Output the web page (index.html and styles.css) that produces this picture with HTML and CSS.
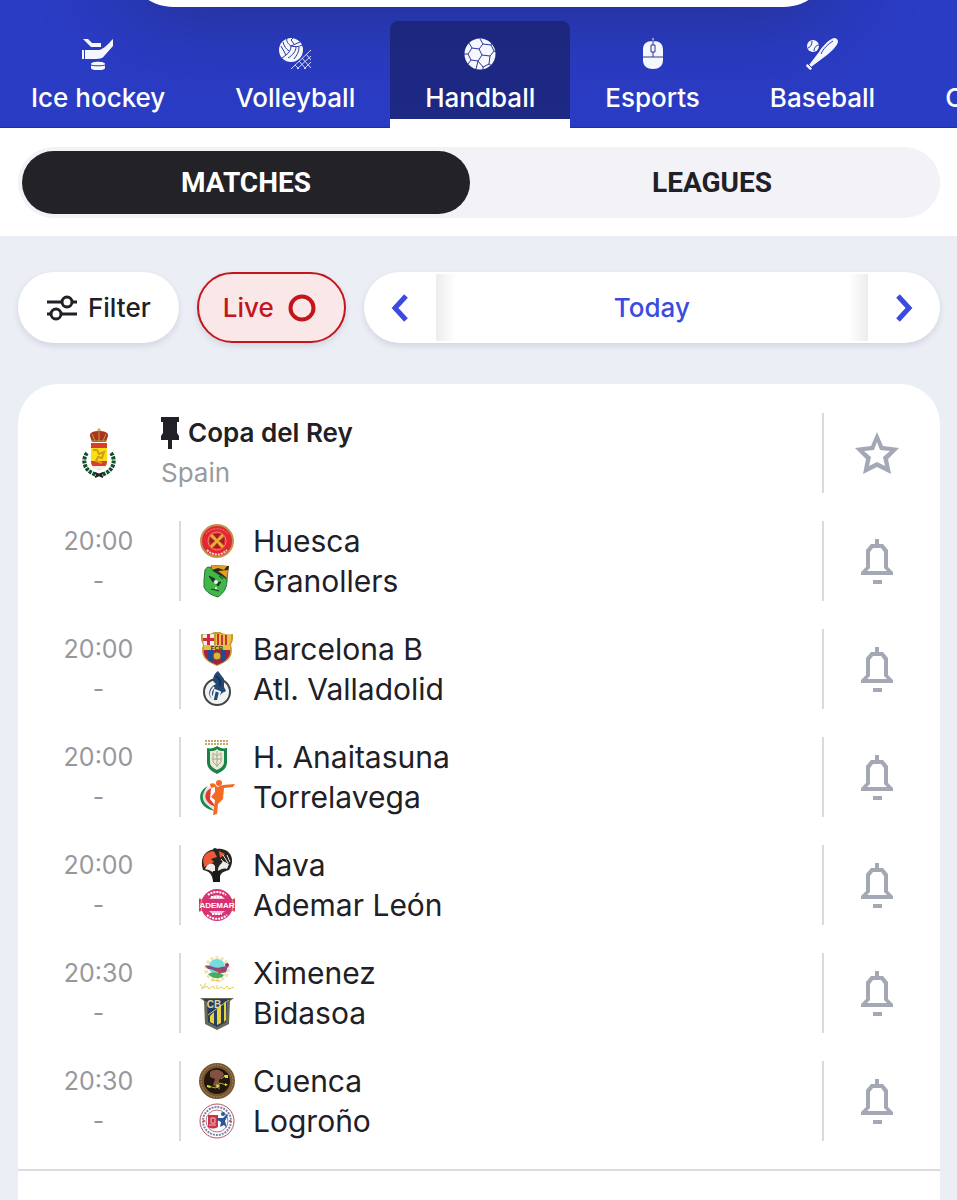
FILE: index.html
```html
<!DOCTYPE html>
<html lang="en">
<head>
  <meta charset="UTF-8">
  <meta name="viewport" content="width=device-width, initial-scale=1.0">
  <title>Handball matches</title>
  <link rel="stylesheet" href="styles.css">
</head>
<body>
  <!-- Shared icons -->
  <svg class="sprite" aria-hidden="true">
    <symbol id="bell" viewBox="0 0 32 45">
      <path fill-rule="evenodd" d="M14 0h4v5h4l5 6v17l5 5v3H0v-3l5-5V11l5-6h4zM12 9l-3 4v16l-3 3h20l-3-3V13l-3-4zM12 41h9v4h-9z"/>
    </symbol>
  </svg>

  <!-- Sports -->
  <header class="sports">
    <div class="sheet"></div>
    <nav class="sports-nav">
      <a href="#" class="sport">
        <svg viewBox="0 0 32 32">
          <path d="M1 1h5l4 4h9v4H9zM3 12h14c5-1 9-6 14-11v7l-8 9c-2 3-5 4-9 4H3z"/>
          <path d="M0 12h2v9H0z"/>
          <path d="M9 26c0-3 14-3 14 0v4c0 3-14 3-14 0z"/>
          <path class="cut" d="M9 27c2 1 12 1 14 0"/>
        </svg>
        <span>Ice hockey</span>
      </a>
      <a href="#" class="sport">
        <svg viewBox="0 0 32 32">
          <circle cx="12" cy="12" r="12"/>
          <path class="cut" d="M8 0c-1 3 1 6 4 8l9-4M12 8c0 4-2 7-5 9L2 8M7 17l-4 3M12 8c4 1 8 1 11-1M17 9c0 4-3 8-8 11M20 9c0 5-2 8-5 12M4 4c1 4 3 7 6 9M14 0l-2 2 3 4"/>
          <path class="net" d="M12 31l20-19M18 31l14-13M25 31l7-7M16 27l4 4M20 23l7 8M23 20l9 10M27 16l5 6"/>
        </svg>
        <span>Volleyball</span>
      </a>
      <a href="#" class="sport active">
        <svg viewBox="0 0 32 32">
          <circle cx="16" cy="16" r="15.5"/>
          <path class="cut" d="M8 10l7 1 3 6-4 6-7-1-3-6zM15 11l4-5-3-5M19 6l8 1 3 6M27 7l1-3M18 17l8 1 4-5M26 18l-1 8-6 3-5-6M25 26l3 2M7 22l-3 4M14 23l-2 8M4 16H0M8 10L5 5M19 29v3M30 13l2 1"/>
        </svg>
        <span>Handball</span>
      </a>
      <a href="#" class="sport">
        <svg viewBox="0 0 32 32">
          <path d="M15.500 0h1v4h-1zM6 12c0-6 3-9 10-9s10 3 10 9v10c0 6-4 9-10 9S6 28 6 22z"/>
          <path class="cut" d="M6 19h20M16 2v5M16 14v5M14 7h4v7h-4z"/>
        </svg>
        <span>Esports</span>
      </a>
      <a href="#" class="sport">
        <svg viewBox="0 0 32 32">
          <circle cx="7" cy="8" r="6"/>
          <path class="cut" d="M2 10c3-1 4-4 4-7M8 13c0-3 2-6 5-6"/>
          <path d="M28 0c3 0 4 2 4 4-1 4-6 9-11 13L5 29l1 2-2 1-4-4 1-2 2 1 10-13C16 9 23 1 28 0z"/>
          <path class="cut" d="M15 16c2-5 7-10 12-13M2 26l4 4"/>
        </svg>
        <span>Baseball</span>
      </a>
      <a href="#" class="sport"><span>Cricket</span></a>
    </nav>
  </header>

  <main>
    <div class="views">
      <div class="segmented">
        <button class="segment active">MATCHES</button>
        <button class="segment">LEAGUES</button>
      </div>
    </div>

    <!-- Filters -->
    <div class="toolbar">
      <button class="pill filter">
        <svg width="32" height="26" viewBox="0 0 32 26">
          <path d="M1 7h15M26 7h5M1 19h4M15 19h16"/>
          <circle cx="21" cy="7" r="5"/>
          <circle cx="10" cy="19" r="5"/>
        </svg>
        Filter
      </button>
      <button class="pill live">
        Live
        <svg width="28" height="28" viewBox="0 0 28 28"><circle cx="14" cy="14" r="11.500"/></svg>
      </button>
      <div class="pill dates">
        <button class="arrow" aria-label="Previous day">
          <svg width="18" height="28" viewBox="0 0 18 28"><path d="M15 2L4 14l11 12"/></svg>
        </button>
        <button class="day">Today</button>
        <button class="arrow" aria-label="Next day">
          <svg width="18" height="28" viewBox="0 0 18 28"><path d="M3 2l11 12L3 26"/></svg>
        </button>
      </div>
    </div>

    <section class="card">
      <div class="league">
        <div class="row league-head">
          <div class="emblem">
            <svg width="34" height="50" viewBox="0 0 34 50">
              <path d="M5 25C0 31 1 44 16 47M29 25c5 6 4 19-11 22" fill="none" stroke="#12502c" stroke-width="4" stroke-dasharray="3 1"/>
              <path d="M13 49l8-4M21 49l-8-4" stroke="#222" stroke-width="2"/>
              <path d="M9 15h16v18c0 6-4 8-8 9-4-1-8-3-8-9z" fill="#f8df16"/>
              <path d="M9 15h16v5H9zM9 33h16c0 4-2 6-5 7h-6c-3-1-5-3-5-7z" fill="#dd3b2c"/>
              <path d="M11 22h4l2 4 5-2-2 6-4-1-2 4 6 2" fill="none" stroke="#d89c13" stroke-width="2"/>
              <path d="M11 38h12v3H11z" fill="#f4eeee"/>
              <path d="M10 14L8 8c-1-4 5-5 9-5s10 1 9 5l-2 6z" fill="#a73721"/>
              <path d="M17 0v13M10 6l3 7M24 6l-3 7M15 2h4M10 13h14" fill="none" stroke="#c79832" stroke-width="1"/>
            </svg>
          </div>
          <div class="league-info">
            <h2>
              <svg width="18" height="32" viewBox="0 0 18 32"><path d="M0 0h18v5h-2v11l2 3v4h-7v9H7v-9H0v-4l2-3V5H0z"/></svg>
              Copa del Rey
            </h2>
            <p>Spain</p>
          </div>
          <button class="action" aria-label="Add to favourites">
            <svg width="44" height="42" viewBox="0 0 44 42"><path fill-rule="evenodd" d="M22 0l6 14 16 2-11 11 3 15-14-7-14 7 3-15L0 16l16-2zM22 10l-3 8-10 1 7 6-2 9 8-4 8 4-2-9 7-6-10-1z"/></svg>
          </button>
        </div>

        <div class="row">
          <div class="time"><span>20:00</span><span>-</span></div>
          <div class="teams">
            <div class="team">
              <svg viewBox="0 0 36 36">
                <circle cx="18" cy="18" r="17" fill="#bd9550"/>
                <circle cx="18" cy="18" r="15" fill="#e32732"/>
                <circle cx="18" cy="18" r="9" fill="#d62b2b" stroke="#eb8c78"/>
                <path d="M12 12l12 12M24 12L12 24" stroke="#e6ae32" stroke-width="3"/>
                <path d="M15 11l3 5 3-5zM15 25l3-5 3 5zM11 15l5 3-5 3zM25 15l-5 3 5 3z" fill="#9d2020"/>
                <path d="M8 27c6 6 14 6 20 0" fill="none" stroke="#ffd8cc" stroke-width="2" stroke-dasharray="2 1"/>
                <path d="M7 11c5-7 17-7 22 0" fill="none" stroke="#ee7a74" stroke-width="1" stroke-dasharray="2 1"/>
              </svg>
              Huesca
            </div>
            <div class="team">
              <svg viewBox="0 0 36 36">
                <path d="M12 2l18 1-2 16-9-3-8-7z" fill="#2c271c"/>
                <path d="M12 2l16 1-3 4-6-2-6 2zM19 8l10-1-1 8-5-4z" fill="#e3a020"/>
                <path d="M6 7c2-4 6-4 8 1l8 5 6 3c0 8-2 13-9 18-7-2-12-5-14-10L5 17z" fill="#42b649" stroke="#237337"/>
                <path d="M10 13l6 3-2 3zM17 20l5-1-3 4zM12 26l8 2M20 13l4 3" fill="#143d24" stroke="#143d24"/>
                <circle cx="17" cy="19" r="2" fill="#e7f4df"/>
                <circle cx="17" cy="25" r="1" fill="#fff"/>
              </svg>
              Granollers
            </div>
          </div>
          <button class="action" aria-label="Notify me"><svg width="32" height="45"><use href="#bell"/></svg></button>
        </div>

        <div class="row">
          <div class="time"><span>20:00</span><span>-</span></div>
          <div class="teams">
            <div class="team">
              <svg viewBox="0 0 36 36">
                <path d="M2 3c5 1 10 0 13-2h6c3 2 8 3 13 2v6l-2 5c3 10-1 16-14 21C5 30 1 24 4 14L2 9z" fill="#c59b37"/>
                <path d="M4 4l11-1v11H5l-1-5z" fill="#f5eeee"/>
                <path d="M8 3h3v11H8zM4 7h11v3H4z" fill="#d52640"/>
                <path d="M17 3l15 1v5l-2 5H17z" fill="#edc240"/>
                <path d="M19 3v11M23 4v10M27 4v10" stroke="#c7323f" stroke-width="2"/>
                <path d="M5 19h26c1 7-4 11-13 15C9 30 4 26 5 19z" fill="#a9203e"/>
                <path d="M9 19h5v13l-5-3zM22 19h5v10l-5 3z" fill="#244a91"/>
                <circle cx="18" cy="25" r="4" fill="#dfb43b" stroke="#705024"/>
                <path d="M5 14h26v5H5z" fill="#e5be45"/>
                <text class="badge-text" x="18" y="19" fill="#302c28">FCB</text>
              </svg>
              Barcelona B
            </div>
            <div class="team">
              <svg viewBox="0 0 36 36">
                <circle cx="18" cy="21" r="13" fill="#f2f2f0" stroke="#42464a" stroke-width="2"/>
                <path d="M15 29C7 25 10 16 17 13l-3-3c0-5 2-8 5-10l6 8v8l2 4-5 3-2 6z" fill="#244874"/>
                <path d="M15 16c-4 5-4 8-1 12l2-9 5 2-2 8 6-7-2 7" fill="none" stroke="#eef3f6" stroke-width="2"/>
                <path d="M17 5c4 3 5 7 4 10" fill="none" stroke="#173153" stroke-width="2"/>
              </svg>
              Atl. Valladolid
            </div>
          </div>
          <button class="action" aria-label="Notify me"><svg width="32" height="45"><use href="#bell"/></svg></button>
        </div>

        <div class="row">
          <div class="time"><span>20:00</span><span>-</span></div>
          <div class="teams">
            <div class="team">
              <svg viewBox="0 0 36 36">
                <path d="M6 2h24M6 5h24" stroke="#c4aa69" stroke-width="2" stroke-dasharray="2 1"/>
                <path d="M8 9c4 1 7 0 10-2 3 2 6 3 10 2v14c0 6-4 9-10 12C12 32 8 29 8 23z" fill="#178348"/>
                <path d="M11 12c3 0 5 0 7-2 2 2 4 2 7 2v11c0 4-3 6-7 8-4-2-7-4-7-8z" fill="#ece8d3"/>
                <path d="M14 14l4 3 4-3v9l-4 4-4-4zM18 12v16M13 20h10" fill="none" stroke="#a3aa8c"/>
              </svg>
              H. Anaitasuna
            </div>
            <div class="team">
              <svg viewBox="0 0 36 36">
                <path d="M9 7C-3 12-2 30 17 32 6 27 1 14 9 7z" fill="#178b52"/>
                <path d="M12 7C-1 13 2 27 17 30 8 24 5 14 12 7z" fill="#e5dfd3"/>
                <path d="M12 9C3 14 5 24 17 28l-6-8z" fill="#e13a2e"/>
                <circle cx="20" cy="4" r="3" fill="#f26a23"/>
                <path d="M11 5c4-2 6 1 7 3l6-2 12-1-2 3-9 1-1 11-5 5-1 10-4 1 2-15-4-3 4-5v-5l-4 1z" fill="#f26a23"/>
              </svg>
              Torrelavega
            </div>
          </div>
          <button class="action" aria-label="Notify me"><svg width="32" height="45"><use href="#bell"/></svg></button>
        </div>

        <div class="row">
          <div class="time"><span>20:00</span><span>-</span></div>
          <div class="teams">
            <div class="team">
              <svg viewBox="0 0 36 36">
                <path d="M4 23C-1 7 11 0 23 2c10 2 13 12 7 21-7 2-9 3-10 11h-6c-1-7-4-10-10-11z" fill="#282423"/>
                <path d="M5 18C2 9 8 4 15 4l3 6-6 2 3 3-10 5zM20 4l6 3-5 4z" fill="#ed5a36"/>
                <path d="M6 22c2-5 7-8 10-3v9c-2-4-6-5-10-6zM19 24c0-6 3-6 5-10l6 3-2 5c-3-1-6 0-9 2z" fill="#f1eeea"/>
                <path d="M24 8l5 8M28 8l3 7M22 12l5 6" stroke="#e9e3df" stroke-width="1"/>
                <circle cx="16" cy="3" r="2" fill="#282423"/>
                <path d="M14 24h7v11h-7z" fill="#171717"/>
              </svg>
              Nava
            </div>
            <div class="team">
              <svg viewBox="0 0 36 36">
                <circle cx="18" cy="18" r="16" fill="#d93378"/>
                <circle cx="18" cy="18" r="10" fill="#f5c7d7"/>
                <path d="M0 12h36v12H0z" fill="#d82f73"/>
                <path d="M9 8c5-4 13-4 18 0M8 28c6 5 14 5 20 0M12 10h12M13 27h10" fill="none" stroke="#fff" stroke-width="2" stroke-dasharray="2 1"/>
                <path d="M0 11l3 2-2 5 2 5-3 2M36 11l-3 2 2 5-2 5 3 2" fill="none" stroke="#e4a15f"/>
                <text class="badge-text badge-wide" x="18" y="21" fill="#fff">ADEMAR</text>
              </svg>
              Ademar León
            </div>
          </div>
          <button class="action" aria-label="Notify me"><svg width="32" height="45"><use href="#bell"/></svg></button>
        </div>

        <div class="row">
          <div class="time"><span>20:30</span><span>-</span></div>
          <div class="teams">
            <div class="team">
              <svg viewBox="0 0 36 36">
                <circle cx="18" cy="14" r="11" fill="none" stroke="#f0e6b4" stroke-width="4" stroke-dasharray="3 2"/>
                <circle cx="18" cy="12" r="8" fill="#72dddd"/>
                <path d="M6 11c6-2 10 4 16 1l7-1-2 6c-7 3-11-3-18-3z" fill="#8b4a78"/>
                <path d="M9 19c6-3 12-1 16 1-3 5-12 4-16-1z" fill="#48ac65"/>
                <path d="M17 13l7 3-4 3z" fill="#bd4545"/>
                <circle cx="28" cy="10" r="2" fill="#a12e70"/>
                <path d="M1 29l3 4 3-5M2 34l6-3 2 3 4-3 2 3M18 30v4l4-2 3 2 3-3 2 3 5-2M12 25l10 1" fill="none" stroke="#e7ce50" stroke-width="1"/>
              </svg>
              Ximenez
            </div>
            <div class="team">
              <svg viewBox="0 0 36 36">
                <path d="M1 3h34l-4 3-1 23-12 6-12-6L5 6z" fill="#676b55"/>
                <path d="M4 4h28l-4 3-1 20-9 5-9-5L8 7z" fill="#253c65"/>
                <path d="M11 21l4-4v12l-4-2zM18 14l4-4v18l-4 2zM25 8l2-2v19l-2 2z" fill="#ead33a"/>
                <path d="M9 20L30 5" stroke="#d0c57a" stroke-width="1"/>
                <text class="badge-text badge-large" x="15" y="13" fill="#dfd59b">CB</text>
              </svg>
              Bidasoa
            </div>
          </div>
          <button class="action" aria-label="Notify me"><svg width="32" height="45"><use href="#bell"/></svg></button>
        </div>

        <div class="row">
          <div class="time"><span>20:30</span><span>-</span></div>
          <div class="teams">
            <div class="team">
              <svg viewBox="0 0 36 36">
                <circle cx="18" cy="18" r="18" fill="#775632"/>
                <circle cx="18" cy="18" r="16" fill="none" stroke="#a68959" stroke-width="1" stroke-dasharray="2 1"/>
                <circle cx="18" cy="18" r="13" fill="#21170f"/>
                <path d="M11 9c4-4 13-2 14 3l-5 5 1 10-7-5 2-6-5-2z" fill="#80523f"/>
                <path d="M8 23l9 2 4-5 6 2M22 16l4-3" fill="none" stroke="#b0ae35"/>
                <path d="M25 12h4v3h-3zM8 22l4 1-1 2-3-1zM17 21l4 2-3 2zM26 20l3 2-3 1z" fill="#d8dd42"/>
              </svg>
              Cuenca
            </div>
            <div class="team">
              <svg viewBox="0 0 36 36">
                <circle cx="18" cy="18" r="17" fill="#fff" stroke="#b75264"/>
                <circle cx="18" cy="18" r="14" fill="none" stroke="#7688a8" stroke-width="2" stroke-dasharray="2 1"/>
                <circle cx="18" cy="18" r="11" fill="#fff" stroke="#bd7180"/>
                <path d="M9 12h10v12c-4 2-7 2-10 0z" fill="#c83447"/>
                <path d="M12 15h4v5h-4zM10 22h7" fill="none" stroke="#efbdc1"/>
                <circle cx="24" cy="11" r="2" fill="#26569b"/>
                <path d="M18 15l6 0 4-4 1 1-3 6 2 7-3-3-4 2 1-5-4-2z" fill="#26569b"/>
                <circle cx="5" cy="18" r="1" fill="#c83447"/>
                <circle cx="31" cy="18" r="1" fill="#c83447"/>
              </svg>
              Logroño
            </div>
          </div>
          <button class="action" aria-label="Notify me"><svg width="32" height="45"><use href="#bell"/></svg></button>
        </div>
      </div>
    </section>
  </main>
</body>
</html>
```
FILE: styles.css
```css
/* General Reset */
* {
  margin: 0;
  padding: 0;
  box-sizing: border-box;
}

body {
  font-family: Inter, "Liberation Sans", sans-serif;
  font-size: 26px;
  background-color: #ebeef5;
  color: #202026;
  min-height: 100vh;
  display: flex;
  flex-direction: column;
}

main {
  flex: 1;
  display: flex;
  flex-direction: column;
}

button {
  font: inherit;
  color: inherit;
  background: none;
  border: 0;
  cursor: pointer;
}

a {
  color: inherit;
  text-decoration: none;
}

svg {
  display: block;
  flex: none;
}

.sprite {
  position: absolute;
  width: 0;
  height: 0;
}

/* Sports */
.sports {
  position: relative;
  background-color: #2b3cc4;
  color: #fff;
  padding-top: 21px;
  overflow: hidden;
  flex: none;
}

.sheet {
  position: absolute;
  top: -93px;
  left: 13%;
  right: 13%;
  height: 100px;
  border-radius: 50px;
  background-color: #fff;
  box-shadow: 0 0 90px rgba(20, 25, 40, 0.4);
}

.sports-nav {
  position: relative;
  display: flex;
  margin-left: -4px;
}

.sport {
  flex: none;
  height: 107px;
  padding: 17px 35px 0;
  display: flex;
  flex-direction: column;
  align-items: center;
  gap: 12px;
  font-weight: 500;
  line-height: 32px;
  border-bottom: 1px solid #2230a4;
}

.sport svg {
  width: 32px;
  height: 32px;
  fill: #f5f7ff;
}

.sport:last-child {
  padding-top: 61px;
}

.sport.active {
  background-color: rgba(23, 31, 99, 0.65);
  border-radius: 8px 8px 0 0;
  border-bottom: 9px solid #fff;
}

.sports .cut {
  fill: none;
  stroke: #2c3797;
  stroke-width: 1px;
}

.sports .net {
  fill: none;
  stroke: #d5dbff;
  stroke-width: 1px;
}

/* Matches / Leagues */
.views {
  background-color: #fff;
  padding: 19px 17px 18px 18px;
}

.segmented {
  display: flex;
  gap: 18px;
  background-color: #f2f2f7;
  border-radius: 36px;
  padding: 4px;
}

.segment {
  flex: 1;
  height: 63px;
  border-radius: 32px;
  font-family: Roboto, "Liberation Sans", sans-serif;
  font-size: 28px;
  font-weight: bold;
}

.segment.active {
  background-color: #222227;
  color: #fff;
}

/* Filters */
.toolbar {
  display: flex;
  gap: 18px;
  padding: 36px 17px 0 18px;
}

.pill {
  height: 71px;
  border-radius: 36px;
  background-color: #fff;
  box-shadow: 0 3px 6px rgba(30, 40, 70, 0.12);
  display: flex;
  align-items: center;
  font-weight: 500;
}

.filter {
  padding: 0 28px;
  gap: 10px;
}

.filter svg {
  fill: none;
  stroke: #202026;
  stroke-width: 3px;
}

.live {
  padding: 0 28px 0 24px;
  gap: 14px;
  color: #c3161c;
  background-color: #fae7e8;
  border: 2px solid #c3161c;
}

.live svg {
  fill: none;
  stroke: #c3161c;
  stroke-width: 4px;
}

.dates {
  flex: 1;
  color: #3a4be0;
}

.arrow {
  width: 72px;
  height: 71px;
  display: flex;
  align-items: center;
  justify-content: center;
}

.arrow svg {
  fill: none;
  stroke: #3a4be0;
  stroke-width: 5px;
}

.day {
  flex: 1;
  height: 67px;
  background: linear-gradient(to right, #ededed, #fff 20px, #fff calc(100% - 20px), #ededed);
}

/* League card */
.card {
  flex: 1;
  margin: 41px 17px 0 18px;
  padding-top: 29px;
  background-color: #fff;
  border-radius: 40px 40px 0 0;
}

.league {
  display: flex;
  flex-direction: column;
  gap: 28px;
  padding-bottom: 28px;
  border-bottom: 2px solid #dcdce0;
}

.row {
  display: grid;
  grid-template-columns: 161px 1fr 118px;
  height: 80px;
}

.league-head {
  grid-template-columns: 143px 1fr 118px;
}

.emblem {
  display: flex;
  align-items: center;
  justify-content: center;
  padding-left: 18px;
}

.league-info {
  line-height: 40px;
}

.league-info h2 {
  display: flex;
  align-items: center;
  gap: 9px;
  font-size: 26px;
  font-weight: 600;
}

.league-info svg {
  fill: #202026;
}

.league-info p {
  color: #999a9f;
}

.time {
  display: flex;
  flex-direction: column;
  align-items: center;
  font-size: 25px;
  line-height: 40px;
  color: #97989d;
}

.teams {
  border-left: 2px solid #d9dade;
  padding-left: 18px;
}

.team {
  display: flex;
  align-items: center;
  gap: 18px;
  height: 40px;
  font-size: 30px;
}

.team svg {
  width: 36px;
  height: 36px;
}

.action {
  border-left: 2px solid #d9dade;
  display: flex;
  align-items: center;
  justify-content: center;
  padding-right: 10px;
}

.action svg {
  fill: #a4a8b5;
}

/* Lettering inside the crests */
.badge-text {
  font-family: "Liberation Sans", sans-serif;
  font-size: 6px;
  font-weight: bold;
  text-anchor: middle;
}

.badge-wide {
  font-size: 8px;
}

.badge-large {
  font-size: 10px;
}
```
